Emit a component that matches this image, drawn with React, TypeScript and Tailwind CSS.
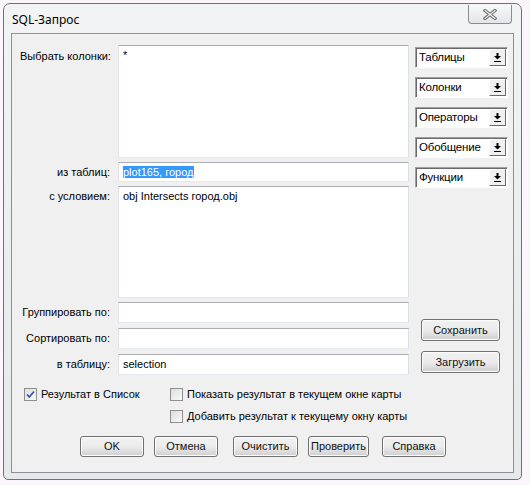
import React from "react";

const font = { fontFamily: '"Liberation Sans", Arial, sans-serif' };

function Field({ label, h, children }: { label: string; h: string; children?: React.ReactNode }) {
  return (
    <div className="flex items-start">
      <div className="w-[99px] pt-[4px] pr-[1px] text-right">{label}</div>
      <div
        className={`ml-[7px] w-[291px] ${h} border border-[#abadb3] border-l-[#e2e3ea] border-r-[#dbdfe6] border-b-[#e3e9ef] bg-white px-[4px] pt-[3px] leading-[13px]`}
      >
        {children}
      </div>
    </div>
  );
}

function Combo({ label }: { label: string }) {
  return (
    <div className="flex h-[21px] w-[93px] border border-t-[#a0a0a0] border-l-[#a0a0a0] border-r-white border-b-white bg-white shadow-[inset_1px_1px_0_#696969]">
      <div className="flex-1 overflow-hidden whitespace-nowrap pl-[3px] pt-[3px] text-[11.5px] leading-[13px] tracking-[-0.2px]">
        {label}
      </div>
      <div className="mr-[1px] mb-[1px] mt-[1px] flex w-[17px] shrink-0 items-center justify-center border border-t-white border-l-white border-r-[#696969] border-b-[#696969] bg-[#f0f0f0]">
        <svg width="9" height="11" viewBox="0 0 9 11">
          <path d="M3.5 1h2v3h2.5L4.5 7.5 1 4h2.5z" fill="#000" />
          <rect x="1" y="9" width="7" height="1" fill="#000" />
        </svg>
      </div>
    </div>
  );
}

function Btn({ label, w, h = "h-[21px]" }: { label: string; w: string; h?: string }) {
  return (
    <div
      className={`${w} ${h} flex items-center justify-center rounded-[3px] border border-[#707070] bg-gradient-to-b from-[#f2f2f2] via-[#ebebeb] to-[#cfcfcf] shadow-[inset_0_0_0_1px_#fcfcfc] text-[#111]`}
    >
      {label}
    </div>
  );
}

function Check({ checked, label }: { checked?: boolean; label: string }) {
  return (
    <div className="flex items-center gap-[4px]">
      <div className="flex h-[13px] w-[13px] items-center justify-center border border-[#8f8f8f] bg-gradient-to-br from-[#dcdcdc] to-[#fbfbfb]">
        {checked && (
          <svg width="9" height="9" viewBox="0 0 9 9">
            <path d="M1 4.5l2.3 2.5L8 1.5" stroke="#3b57a6" strokeWidth="1.8" fill="none" />
          </svg>
        )}
      </div>
      <span>{label}</span>
    </div>
  );
}

export default function App() {
  return (
    <div className="h-[485px] w-[530px] bg-[#fbf6fb] p-[3px]" style={font}>
      <div className="flex h-[477px] w-[519px] flex-col rounded-t-[7px] rounded-b-[5px] border border-[#6f7174] bg-gradient-to-b from-[#f2f3f5] to-[#e6e8eb] px-[7px] pb-[6px]">
        {/* title bar */}
        <div className="flex h-[29px] items-start justify-between">
          <div
            className="pt-[9px] pl-[1px] text-[12px] leading-[14px] text-black"
            style={{ fontFamily: '"Noto Sans", "Open Sans", sans-serif' }}
          >
            SQL-Запрос
          </div>
          <div className="mr-[2px] mt-[1px] flex h-[19px] w-[44px] items-center justify-center rounded-b-[4px] border border-t-0 border-[#8a8c8f] bg-gradient-to-b from-[#f7f8f9] to-[#e3e5e8]">
            <svg width="14" height="11" viewBox="0 0 14 11">
              <path d="M2 1.5l10 8M12 1.5l-10 8" stroke="#6b6b6b" strokeWidth="3.2" strokeLinecap="square" />
              <path d="M2 1.5l10 8M12 1.5l-10 8" stroke="#fafafa" strokeWidth="1.2" strokeLinecap="square" />
            </svg>
          </div>
        </div>

        {/* client area */}
        <div className="flex h-[440px] w-[503px] flex-col border border-[#8d9094] bg-[#f0f0f0] text-[11px] leading-[13px] text-black">
          <div className="flex">
            <div className="flex w-[397px] flex-col">
              <div className="mt-[11px] flex items-start">
                <div className="w-[99px] pl-[8px] pt-[5px]">Выбрать колонки:</div>
                <div className="ml-[7px] h-[113px] w-[291px] border border-[#abadb3] border-l-[#e2e3ea] border-r-[#dbdfe6] border-b-[#e3e9ef] bg-white px-[4px] pt-[3px]">
                  *
                </div>
              </div>
              <div className="mt-[4px]">
                <Field label="из таблиц:" h="h-[20px]">
                  <span className="bg-[#3399ff] text-white">plot165, город</span>
                </Field>
              </div>
              <div className="mt-[4px]">
                <Field label="с условием:" h="h-[112px]">
                  obj Intersects город.obj
                </Field>
              </div>
              <div className="mt-[4px]">
                <Field label="Группировать по:" h="h-[21px]" />
              </div>
              <div className="mt-[5px]">
                <Field label="Сортировать по:" h="h-[21px]" />
              </div>
              <div className="mt-[5px]">
                <Field label="в таблицу:" h="h-[21px]">
                  selection
                </Field>
              </div>
            </div>

            <div className="ml-[6px] flex flex-col">
              <div className="mt-[13px] flex flex-col gap-[9px]">
                <Combo label="Таблицы" />
                <Combo label="Колонки" />
                <Combo label="Операторы" />
                <Combo label="Обобщение" />
                <Combo label="Функции" />
              </div>
              <div className="ml-[6px] mt-[131px] flex flex-col gap-[10px]">
                <Btn label="Сохранить" w="w-[79px]" h="h-[22px]" />
                <Btn label="Загрузить" w="w-[79px]" h="h-[22px]" />
              </div>
            </div>
          </div>

          <div className="mt-[13px] flex">
            <div className="ml-[12px] w-[146px]">
              <Check checked label="Результат в Список" />
            </div>
            <div className="flex flex-col gap-[9px]">
              <Check label="Показать результат в текущем окне карты" />
              <Check label="Добавить результат к текущему окну карты" />
            </div>
          </div>

          <div className="mt-[13px] flex">
            <div className="ml-[68px] flex">
              <Btn label="OK" w="w-[64px]" />
              <div className="ml-[10px]">
                <Btn label="Отмена" w="w-[64px]" />
              </div>
              <div className="ml-[15px]">
                <Btn label="Очистить" w="w-[65px]" />
              </div>
              <div className="ml-[10px]">
                <Btn label="Проверить" w="w-[61px]" />
              </div>
              <div className="ml-[13px]">
                <Btn label="Справка" w="w-[64px]" />
              </div>
            </div>
          </div>
        </div>
      </div>
    </div>
  );
}
